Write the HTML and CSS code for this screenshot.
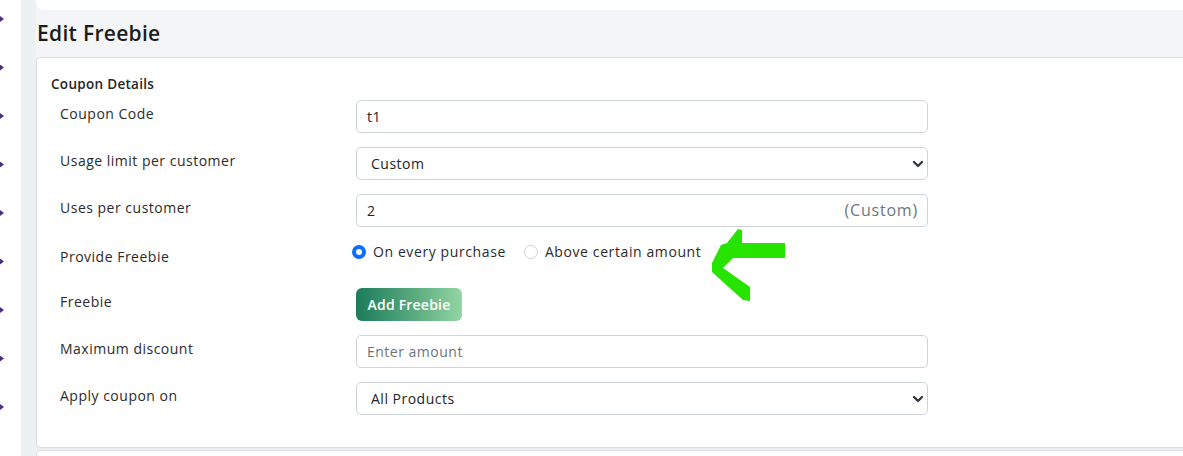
FILE: index.html
```html
<!DOCTYPE html>
<html lang="en">
<head>
    <meta charset="UTF-8">
    <meta name="viewport" content="width=device-width, initial-scale=1.0">
    <title>Edit Freebie</title>
    <link rel="stylesheet" href="styles.css">
</head>
<body>
    <div class="layout">
        <nav class="sidebar">
            <span class="nav-mark"></span>
            <span class="nav-mark"></span>
            <span class="nav-mark"></span>
            <span class="nav-mark"></span>
            <span class="nav-mark"></span>
            <span class="nav-mark"></span>
            <span class="nav-mark"></span>
            <span class="nav-mark"></span>
            <span class="nav-mark"></span>
        </nav>
        <div class="gutter"></div>
        <main class="main">
            <div class="topbar"></div>
            <h1 class="page-title">Edit Freebie</h1>

            <div class="card">
                <div class="card-title">Coupon Details</div>

                <div class="form-row">
                    <label class="form-label">Coupon Code</label>
                    <div class="form-field">
                        <input class="form-control" type="text" value="t1">
                    </div>
                </div>

                <div class="form-row">
                    <label class="form-label">Usage limit per customer</label>
                    <div class="form-field">
                        <select class="form-select">
                            <option>Custom</option>
                            <option>Once</option>
                            <option>Unlimited</option>
                        </select>
                    </div>
                </div>

                <div class="form-row">
                    <label class="form-label">Uses per customer</label>
                    <div class="form-field with-suffix">
                        <input class="form-control" type="text" value="2">
                        <span class="suffix">(Custom)</span>
                    </div>
                </div>

                <div class="form-row">
                    <label class="form-label label-radio">Provide Freebie</label>
                    <div class="form-field radio-group">
                        <label class="radio"><input type="radio" name="provide" checked> On every purchase</label>
                        <label class="radio"><input type="radio" name="provide"> Above certain amount</label>
                    </div>
                </div>

                <div class="form-row">
                    <label class="form-label">Freebie</label>
                    <div class="form-field">
                        <button class="btn-gradient" type="button">Add Freebie</button>
                    </div>
                </div>

                <div class="form-row">
                    <label class="form-label">Maximum discount</label>
                    <div class="form-field">
                        <input class="form-control" type="text" placeholder="Enter amount">
                    </div>
                </div>

                <div class="form-row">
                    <label class="form-label">Apply coupon on</label>
                    <div class="form-field">
                        <select class="form-select">
                            <option>All Products</option>
                            <option>Selected Products</option>
                        </select>
                    </div>
                </div>
            </div>

            <div class="card card-next"></div>
        </main>
    </div>

    <!-- hand-drawn pointer next to the freebie options -->
    <svg class="pointer" width="80" height="80" viewBox="0 0 80 80">
        <polygon fill="#27e400" points="26,1 30,2 30,15 73,15 73,30 21,30 11,40 38,59 38,73 31,72 0,44 0,35 9,17 15,15"/>
    </svg>
</body>
</html>
```

FILE: styles.css
```css
* {
    box-sizing: border-box;
}
html, body {
    margin: 0;
    padding: 0;
    height: 100%;
    overflow: hidden;
}
body {
    font-family: "Open Sans", "Liberation Sans", sans-serif;
    font-size: 14px;
    letter-spacing: 0.5px;
    color: #212529;
    background: #f3f5f6;
}
.layout {
    display: flex;
    height: 100%;
}
.sidebar {
    width: 21px;
    flex-shrink: 0;
    background: #fff;
    display: flex;
    flex-direction: column;
    gap: 42.5px;
    padding-top: 16px;
}
.nav-mark {
    display: block;
    width: 4px;
    height: 6px;
    background: #4b2f7d;
    clip-path: polygon(0 0, 100% 50%, 0 100%);
}
.gutter {
    width: 15px;
    flex-shrink: 0;
    background: #edf1f2;
}
.main {
    width: 1170px;
    flex-shrink: 0;
}
.topbar {
    height: 10px;
    background: #fff;
    border-bottom-left-radius: 8px;
}
.page-title {
    margin: 8px 0 9px 1px;
    font-size: 21px;
    line-height: 30px;
    font-weight: 600;
    letter-spacing: 0.3px;
    color: #1c1c1c;
}
.card {
    background: #fff;
    border: 1px solid #dcdfe1;
    border-radius: 4px;
    padding: 16px 14px 32px;
    box-shadow: 0 1px 2px rgba(0, 0, 0, 0.06);
}
.card-title {
    font-weight: 600;
    font-size: 13.5px;
    line-height: 20px;
    letter-spacing: 0.3px;
    color: #262626;
    margin-bottom: 6px;
}
.form-row {
    display: flex;
    align-items: flex-start;
    padding-left: 9px;
    margin-bottom: 14px;
}
.form-row:last-child {
    margin-bottom: 0;
}
.form-label {
    width: 296px;
    flex-shrink: 0;
    padding-top: 4px;
    line-height: 20px;
    color: #2b2b2b;
}
.form-label.label-radio {
    padding-top: 6px;
}
.form-field {
    width: 572px;
    height: 33px;
}
.form-control,
.form-select {
    width: 100%;
    height: 33px;
    border: 1px solid #ced4da;
    border-radius: 5px;
    background-color: #fff;
    font: inherit;
    letter-spacing: inherit;
    color: #212529;
    padding: 0 10px;
    outline: none;
}
.form-control::placeholder {
    color: #6c757d;
}
.form-select {
    appearance: none;
    -webkit-appearance: none;
    padding-left: 14px;
    background-image: url("data:image/svg+xml,%3csvg xmlns='http://www.w3.org/2000/svg' viewBox='0 0 12 8'%3e%3cpath fill='none' stroke='%23343a40' stroke-width='2.4' stroke-linecap='round' stroke-linejoin='round' d='M2 2l4 4 4-4'/%3e%3c/svg%3e");
    background-repeat: no-repeat;
    background-position: right 3px center;
    background-size: 12px 8px;
}
.with-suffix {
    position: relative;
}
.suffix {
    position: absolute;
    right: 10px;
    top: 0;
    line-height: 33px;
    font-size: 16px;
    letter-spacing: 0.8px;
    color: #6c757d;
}
.radio-group {
    display: flex;
    align-items: flex-start;
    gap: 18px;
    padding-top: 1px;
    margin-left: -4px;
}
.radio {
    display: flex;
    align-items: center;
    gap: 7px;
    line-height: 20px;
    letter-spacing: 0.6px;
    color: #2b2b2b;
}
.radio input {
    appearance: none;
    -webkit-appearance: none;
    margin: 0;
    width: 14px;
    height: 14px;
    border: 1px solid #d0d4d8;
    border-radius: 50%;
    background: #fff;
}
.radio input:checked {
    border: 4px solid #0d6efd;
    background: #fff;
}
.btn-gradient {
    height: 33px;
    width: 106px;
    padding: 0;
    border: 0;
    border-radius: 6px;
    background: linear-gradient(90deg, #1c7c5a 0%, #5aaa7f 55%, #93d5a3 100%);
    color: #fff;
    font: inherit;
    letter-spacing: 0.2px;
    font-weight: 600;
}
.card-next {
    margin-top: 2px;
    height: 60px;
    padding: 0;
}
.pointer {
    position: absolute;
    left: 712px;
    top: 228px;
}
```
